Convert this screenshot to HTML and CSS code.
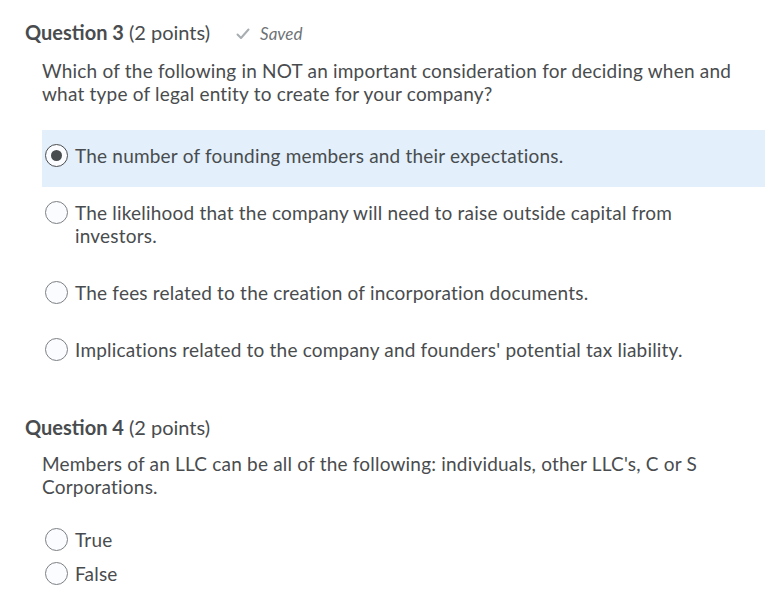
FILE: index.html
```html
<!DOCTYPE html>
<html lang="en">
<head>
    <meta charset="UTF-8">
    <meta name="viewport" content="width=device-width, initial-scale=1.0">
    <title>Quiz</title>
    <link rel="stylesheet" href="styles.css">
</head>
<body>
    <div class="quiz">
        <div class="question">
            <h2 class="question-title">
                <span class="number">Question 3</span>
                <span class="points">(2 points)</span>
                <span class="saved">
                    <svg class="check" width="14" height="12" viewBox="0 0 14 12"><path d="M1.5 6.5 L5 10 L12.5 1.5" fill="none" stroke="#a7adb1" stroke-width="2" stroke-linecap="round" stroke-linejoin="round"/></svg>
                    Saved
                </span>
            </h2>
            <div class="question-text">Which of the following in NOT an important consideration for deciding when and what type of legal entity to create for your company?</div>
            <div class="options">
                <div class="option selected">
                    <span class="radio checked"></span>
                    <span class="label">The number of founding members and their expectations.</span>
                </div>
                <div class="option">
                    <span class="radio"></span>
                    <span class="label">The likelihood that the company will need to raise outside capital from investors.</span>
                </div>
                <div class="option">
                    <span class="radio"></span>
                    <span class="label">The fees related to the creation of incorporation documents.</span>
                </div>
                <div class="option">
                    <span class="radio"></span>
                    <span class="label">Implications related to the company and founders' potential tax liability.</span>
                </div>
            </div>
        </div>

        <div class="question">
            <h2 class="question-title">
                <span class="number">Question 4</span>
                <span class="points">(2 points)</span>
            </h2>
            <div class="question-text">Members of an LLC can be all of the following: individuals, other LLC's, C or S Corporations.</div>
            <div class="options compact">
                <div class="option">
                    <span class="radio"></span>
                    <span class="label">True</span>
                </div>
                <div class="option">
                    <span class="radio"></span>
                    <span class="label">False</span>
                </div>
            </div>
        </div>
    </div>
</body>
</html>
```

FILE: styles.css
```css
body {
    font-family: Lato, "Noto Sans", sans-serif;
    color: #494c4e;
    background: #fff;
    margin: 0;
}
.quiz {
    padding: 20px 18px 0 25px;
}
.question {
    margin-bottom: 34px;
}
.question-title {
    display: flex;
    align-items: baseline;
    margin: 0;
    font-size: 20px;
    line-height: 24px;
    font-weight: 700;
}
.points {
    font-weight: 400;
    margin-left: 5px;
}
.saved {
    margin-left: 26px;
    font-size: 17px;
    font-weight: 400;
    font-style: italic;
    color: #6e7376;
}
.check {
    margin-right: 6px;
}
.question-text {
    margin: 14px 0 0 17px;
    font-size: 19px;
    letter-spacing: 0.2px;
    line-height: 22.5px;
    max-width: 715px;
}
.options {
    margin: 25px 0 0 17px;
}
.option {
    display: flex;
    align-items: flex-start;
    padding: 14px 20px 20px 3px;
    font-size: 19px;
    letter-spacing: 0.2px;
    line-height: 23px;
}
.option.selected {
    background: #e3f0fc;
}
.radio {
    flex: none;
    width: 21px;
    height: 21px;
    margin-right: 7px;
    border: 1px solid #7c8184;
    border-radius: 50%;
    background: #fbfcff;
    display: flex;
    align-items: center;
    justify-content: center;
}
.radio.checked {
    border-color: #494c4e;
}
.radio.checked::after {
    content: "";
    width: 11px;
    height: 11px;
    border-radius: 50%;
    background: #494c4e;
}
.label {
    max-width: 640px;
}
.options.compact {
    margin-top: 25px;
}
.compact .option {
    padding: 5px 0 6px 3px;
}
```
